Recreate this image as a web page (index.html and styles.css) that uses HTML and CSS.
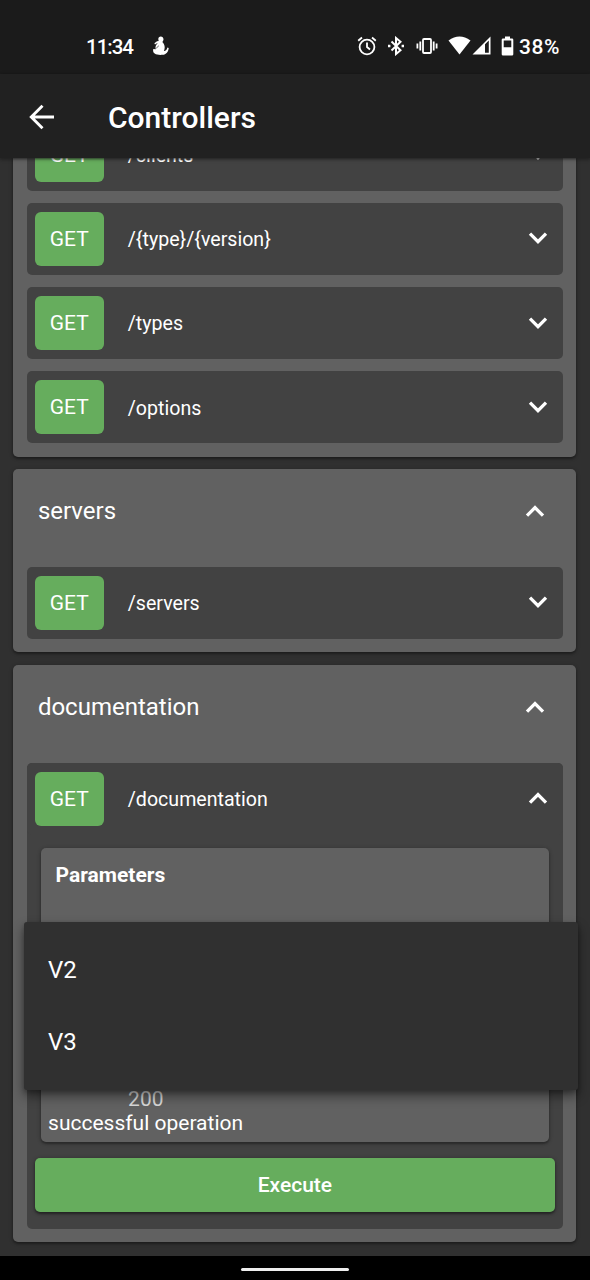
FILE: index.html
```html
<!DOCTYPE html>
<html lang="en">
<head>
<meta charset="utf-8">
<title>Controllers</title>
<link rel="stylesheet" href="styles.css">
</head>
<body>
<svg class="defs" width="0" height="0">
  <symbol id="down" viewBox="0 0 20 14"><path d="M2 2.600 10 10.600l8-8"/></symbol>
  <symbol id="up" viewBox="0 0 20 14"><path d="M2 11.700 10 3.700l8 8"/></symbol>
</svg>
<div class="screen">
  <header class="status">
    <span class="time">11:34</span>
    <svg class="figure" width="18" height="20" viewBox="0 0 18 20"><path fill="#fff" d="M6.300 3.300C6.300 1.500 7.300.5 8.800.5s2.700 1.100 2.700 2.800c0 1.200-.6 2-1.200 2.700 1.300 1.200 2.400 3 2.400 5.200 0 1.300-.3 2.600-.8 3.800 1.800.1 3-1.300 3.500-3.500l1.300.4c-.2 3.600-2.500 6.600-6.200 6.900-2.500.3-6 .1-7.800-1.300C1.100 16.600.8 14.600 1.300 13l2.500.2C3 11 3.700 8.800 5.800 7.300L4.500 7.600 3 8.500l-.6-1.300L5 5.300l1.700-.2z"/><path fill="none" stroke="#1b1b1b" stroke-width=".7" d="m4.200 12.200 2.600-2.400"/></svg>
    <div class="indicators">
      <svg width="20" height="20" viewBox="0 0 20 20" fill="none" stroke="#fff" stroke-width="1.800"><circle cx="10" cy="11" r="7.400"/><path d="M10 6.500V11l3 2.500M1.200 4.700 5 1.500M18.800 4.700 15 1.500"/></svg>
      <svg width="18" height="20" viewBox="0 0 18 20" fill="none" stroke="#fff" stroke-width="2"><path d="m4.500 5.500 9 8.700L9 18V2l4.500 3.800-9 8.700"/><path d="M1 10h2.400M14.600 10H17" stroke-width="2.400"/></svg>
      <svg width="22" height="18" viewBox="0 0 22 18" fill="none" stroke="#fff" stroke-width="1.800"><rect x="7" y="2" width="8" height="14" rx="1"/><path d="M4.300 4.500v9M17.700 4.500v9M1.400 6.500v5M20.600 6.500v5"/></svg>
      <svg width="23" height="19" viewBox="0 0 23 19"><path fill="#fff" d="M.5 4.500Q11.500-3.500 22.500 4.500L11.500 18.500Z"/></svg>
      <svg width="19" height="19" viewBox="0 0 19 19"><path fill="#fff" fill-rule="evenodd" d="M18.500.5v18H.5zM13 8.200v8.600h3.800V4.500z"/></svg>
      <svg width="13" height="20" viewBox="0 0 13 20"><path fill="#fff" fill-rule="evenodd" d="M4 .5h5v2h2q1.300 0 1.300 1.300v14.500q0 1.200-1.300 1.200H2Q.7 19.500.7 18.300V3.800Q.7 2.500 2 2.500h2zM2.700 4.500v6.800h7.600V4.500z"/></svg>
      <span class="percent">38%</span>
    </div>
  </header>
  <div class="appbar">
    <svg width="26" height="26" viewBox="0 0 26 26" fill="none" stroke="#fff" stroke-width="2.900"><path d="M25 13H3M13.500 1.800 2.300 13l11.200 11.200"/></svg>
    <h1>Controllers</h1>
  </div>
  <main class="list">
    <section class="card first">
      <div class="row"><span class="get">GET</span><span class="path">/clients</span><svg class="chev"><use href="#down"/></svg></div>
      <div class="row"><span class="get">GET</span><span class="path">/{type}/{version}</span><svg class="chev"><use href="#down"/></svg></div>
      <div class="row"><span class="get">GET</span><span class="path">/types</span><svg class="chev"><use href="#down"/></svg></div>
      <div class="row"><span class="get">GET</span><span class="path">/options</span><svg class="chev"><use href="#down"/></svg></div>
    </section>
    <section class="card">
      <div class="head"><h2>servers</h2><svg class="chev"><use href="#up"/></svg></div>
      <div class="row"><span class="get">GET</span><span class="path">/servers</span><svg class="chev"><use href="#down"/></svg></div>
    </section>
    <section class="card">
      <div class="head"><h2>documentation</h2><svg class="chev"><use href="#up"/></svg></div>
      <div class="endpoint">
        <div class="row"><span class="get">GET</span><span class="path">/documentation</span><svg class="chev"><use href="#up"/></svg></div>
        <div class="params">
          <h3>Parameters</h3>
          <div class="response"><span class="code">200</span><span class="desc">successful operation</span></div>
        </div>
        <button class="execute">Execute</button>
      </div>
    </section>
    <div class="menu"><div>V2</div><div>V3</div></div>
  </main>
  <footer class="nav"><span class="pill"></span></footer>
</div>
</body>
</html>
```

FILE: styles.css
```css
* { box-sizing: border-box; }
body { margin: 0; font-family: Roboto, sans-serif; color: #fff; background: #303030; }
h1, h2, h3 { margin: 0; }
.defs { position: absolute; }
.screen { width: 590px; height: 1280px; display: flex; flex-direction: column; overflow: hidden; }
.status { flex: none; height: 74px; background: #1b1b1b; display: flex; align-items: center; padding: 19px 28px 0 86px; }
.time { font-size: 20.5px; font-weight: 500; width: 66px; letter-spacing: -1px; }
.figure { margin-top: -2px; }
.indicators { margin-left: auto; display: flex; align-items: center; }
.indicators svg { margin-top: -2px; }
.indicators svg:nth-child(1) { margin-right: 10px; }
.indicators svg:nth-child(2) { margin-right: 11px; }
.indicators svg:nth-child(3) { margin-right: 10px; }
.indicators svg:nth-child(4) { margin-right: 1px; }
.indicators svg:nth-child(5) { margin-right: 10px; }
.indicators svg:nth-child(6) { margin-right: 5px; }
.percent { font-size: 21px; font-weight: 500; width: 43px; letter-spacing: .6px; white-space: nowrap; }
.appbar { flex: none; height: 84px; background: #212121; display: flex; align-items: center; padding: 2px 29px 0; gap: 53px; position: relative; z-index: 2; box-shadow: 0 1px 2px #212121aa, 0 1px 4px #0005; }
h1 { font-size: 30px; font-weight: 500; padding-top: 1px; }
.list { position: relative; flex: 1; overflow: hidden; padding: 0 14px 0 13.400px; display: flex; flex-direction: column; gap: 12.200px; }
.card { flex: none; background: #616161; border-radius: 5px; padding: 0 13.500px 13.500px; display: flex; flex-direction: column; gap: 12.200px; box-shadow: 0 2px 2px #0003, 0 1px 4px #0005; }
.first { margin-top: -53px; padding-top: 13.700px; }
.head { height: 98px; margin-bottom: -12.200px; padding: 0 15px 13px 11px; display: flex; align-items: center; justify-content: space-between; }
.head .chev { margin-right: 3px; }
h2 { font-size: 24px; font-weight: 400; }
.row { height: 72px; background: #424242; border-radius: 5px; display: flex; align-items: center; padding: 0 15px 0 7.900px; }
.get { width: 69px; height: 54px; border-radius: 6px; background: #66ad5d; display: flex; align-items: center; justify-content: center; font-size: 21px; }
.path { margin-left: 24px; font-size: 19.600px; padding-top: 1.500px; }
.chev { width: 20px; height: 14px; margin-left: auto; margin-top: -1px; fill: none; stroke: #fff; stroke-width: 3.300; }
.endpoint { background: #424242; border-radius: 5px; height: 466px; display: flex; flex-direction: column; }
.params { margin: 13.500px 13.500px 16px 13.700px; height: 294px; background: #616161; border-radius: 5px; box-shadow: 0 2px 2px #0003, 0 1px 4px #0005; display: flex; flex-direction: column; justify-content: space-between; padding: 15px 8px 7px 7.500px; }
h3 { font-size: 21px; font-weight: 700; line-height: 24px; margin-left: 7.500px; }
.response { display: flex; flex-direction: column; font-size: 21px; line-height: 24px; }
.code { margin-left: 80px; color: #d8d8d8; }
.execute { flex: none; border: 0; margin: 0 7.500px 0 7.900px; height: 54px; border-radius: 5px; background: #66ad5d; color: #fff; font: 500 21px Roboto, sans-serif; box-shadow: 0 2px 2px #0004, 0 1px 4px #0006; }
.menu { position: absolute; left: 24px; top: 764px; width: 553.500px; height: 168px; padding: 12px 24px; background: #303030; border-radius: 3px; font-size: 24px; line-height: 72px; box-shadow: 0 6px 12px #0007, 0 2px 4px #0003; }
.nav { flex: none; height: 24px; background: #000; display: flex; align-items: center; justify-content: center; padding-top: 2px; position: relative; z-index: 2; }
.pill { width: 108px; height: 3px; border-radius: 2px; background: #eee; }
```
